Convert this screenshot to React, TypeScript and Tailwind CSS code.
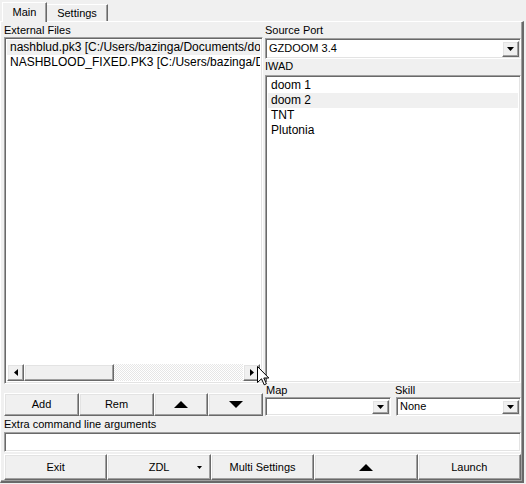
import React from 'react';

// classic win32 3D edges
const sunken = 'border border-t-[#a0a0a0] border-l-[#a0a0a0] border-r-white border-b-white shadow-[inset_1px_1px_0_#696969,inset_-1px_-1px_0_#e3e3e3]';
const raised = 'border border-t-white border-l-white border-r-[#696969] border-b-[#696969] shadow-[inset_-1px_-1px_0_#a0a0a0,inset_1px_1px_0_#e3e3e3] bg-[#f0f0f0]';

const externalFiles = [
  'nashblud.pk3 [C:/Users/bazinga/Documents/doom/nashblud.pk3]',
  'NASHBLOOD_FIXED.PK3 [C:/Users/bazinga/Documents/doom/NASHBLOOD_FIXED.PK3]',
];
const iwads = ['doom 1', 'doom 2', 'TNT', 'Plutonia'];

function Tri({ dir, w, h }: { dir: 'up' | 'down' | 'left' | 'right'; w: number; h: number }) {
  const pts = {
    up: `0,${h} ${w / 2},0 ${w},${h}`,
    down: `0,0 ${w},0 ${w / 2},${h}`,
    left: `${w},0 ${w},${h} 0,${h / 2}`,
    right: `0,0 0,${h} ${w},${h / 2}`,
  }[dir];
  return (
    <svg width={w} height={h} viewBox={`0 0 ${w} ${h}`} className="block">
      <polygon points={pts} fill="#000" />
    </svg>
  );
}

function Combo({ value, className = '' }: { value?: string; className?: string }) {
  return (
    <div className={`${sunken} bg-white flex items-center justify-between pl-[2px] pr-[1px] ${className}`}>
      <span className="text-[11px] leading-none pl-[1px]">{value}</span>
      <div className={`${raised} w-[17px] h-[calc(100%-3px)] flex items-center justify-center`}>
        <Tri dir="down" w={7} h={4} />
      </div>
    </div>
  );
}

function Button({ children, className = '' }: { children: React.ReactNode; className?: string }) {
  return (
    <div className={`${raised} flex items-center justify-center text-[11px] ${className}`}>{children}</div>
  );
}

export default function App() {
  return (
    <div className="w-[526px] h-[484px] bg-[#f0f0f0] relative overflow-hidden text-black font-['Liberation_Sans',Arial,sans-serif] select-none">
      {/* tabs */}
      <div className="flex items-end h-[21px] pl-[2px]">
        <div className="relative z-10 -mb-px h-[20px] w-[45px] bg-[#f0f0f0] border-t border-l border-t-white border-l-white border-r border-r-[#696969] shadow-[inset_-1px_0_0_#a0a0a0] flex items-center justify-center text-[11px] pb-[1px]">
          Main
        </div>
        <div className="h-[17px] w-[61px] border-t border-t-white border-r border-r-[#696969] shadow-[inset_-1px_0_0_#a0a0a0] flex items-center justify-center text-[11px]">
          Settings
        </div>
      </div>

      {/* tab page */}
      <div className="w-[524px] h-[462px] border-t border-l border-t-white border-l-white border-r-2 border-b-2 border-r-[#696969] border-b-[#696969] shadow-[inset_-1px_-1px_0_#a0a0a0] pl-[3px] pr-[1px] pt-[2px] flex flex-col">
        <div className="flex gap-[2px] h-[392px]">
          {/* left column */}
          <div className="w-[259px] flex flex-col">
            <div className="h-[13px] text-[11px] leading-[13px]">External Files</div>
            <div className={`${sunken} bg-white h-[347px] p-[2px] flex flex-col`}>
              <div className="flex-1 overflow-hidden">
                {externalFiles.map((f, i) => (
                  <div key={f} className={`h-[15px] leading-[15px] text-[12px] pl-[3px] whitespace-nowrap ${i === 0 ? 'bg-[#f0f0f0]' : ''}`}>
                    {f}
                  </div>
                ))}
              </div>
              <div className="h-[17px] flex">
                <div className={`${raised} w-[17px] flex items-center justify-center`}>
                  <Tri dir="left" w={4} h={7} />
                </div>
                <div className={`${raised} w-[90px]`} />
                <div className="flex-1 bg-[repeating-conic-gradient(#ffffff_0%_25%,#e6e6e6_0%_50%)] bg-[length:2px_2px]" />
                <div className={`${raised} w-[17px] flex items-center justify-center`}>
                  <Tri dir="right" w={4} h={7} />
                </div>
              </div>
            </div>
            <div className="flex mt-[9px] h-[23px]">
              <Button className="w-[75px]">Add</Button>
              <Button className="w-[75px]">Rem</Button>
              <Button className="w-[54px]"><Tri dir="up" w={14} h={7} /></Button>
              <Button className="w-[55px]"><Tri dir="down" w={14} h={7} /></Button>
            </div>
          </div>

          {/* right column */}
          <div className="w-[256px] flex flex-col">
            <div className="h-[13px] text-[11px] leading-[13px]">Source Port</div>
            <Combo value="GZDOOM 3.4" className="h-[21px] mt-[1px]" />
            <div className="h-[16px] text-[11px] leading-[13px] pt-[1px]">IWAD</div>
            <div className={`${sunken} bg-white h-[308px] p-[2px]`}>
              {iwads.map((w, i) => (
                <div key={w} className={`h-[15px] leading-[15px] text-[12px] pl-[3px] ${i === 1 ? 'bg-[#f0f0f0]' : ''}`}>
                  {w}
                </div>
              ))}
            </div>
            <div className="flex gap-[5px] h-[14px] text-[11px] leading-[14px]">
              <div className="w-[125px] pl-[1px]">Map</div>
              <div className="flex-1">Skill</div>
            </div>
            <div className="flex gap-[5px] h-[19px]">
              <Combo className="w-[126px]" />
              <Combo value="None" className="flex-1" />
            </div>
          </div>
        </div>

        <div className="h-[16px] text-[11px] leading-[13px] pt-[2px]">Extra command line arguments</div>
        <div className={`${sunken} bg-white h-[20px] w-[517px]`} />
        <div className="grid grid-cols-5 mt-[2px] h-[26px] w-[517px]">
          <Button>Exit</Button>
          <Button className="relative">
            ZDL
            <span className="absolute right-[8px] top-[11px]"><Tri dir="down" w={5} h={3} /></span>
          </Button>
          <Button>Multi Settings</Button>
          <Button><Tri dir="up" w={14} h={7} /></Button>
          <Button>Launch</Button>
        </div>
      </div>

      {/* mouse pointer */}
      <svg width="13" height="20" viewBox="0 0 13 20" className="absolute left-[257px] top-[366px] z-20">
        <path d="M0.5 0.5 L0.5 16.5 L4.5 12.8 L7.2 18.8 L9.4 17.8 L6.8 12 L11.8 12 Z" fill="#fff" stroke="#000" strokeWidth="1" strokeLinejoin="miter" />
      </svg>
    </div>
  );
}
